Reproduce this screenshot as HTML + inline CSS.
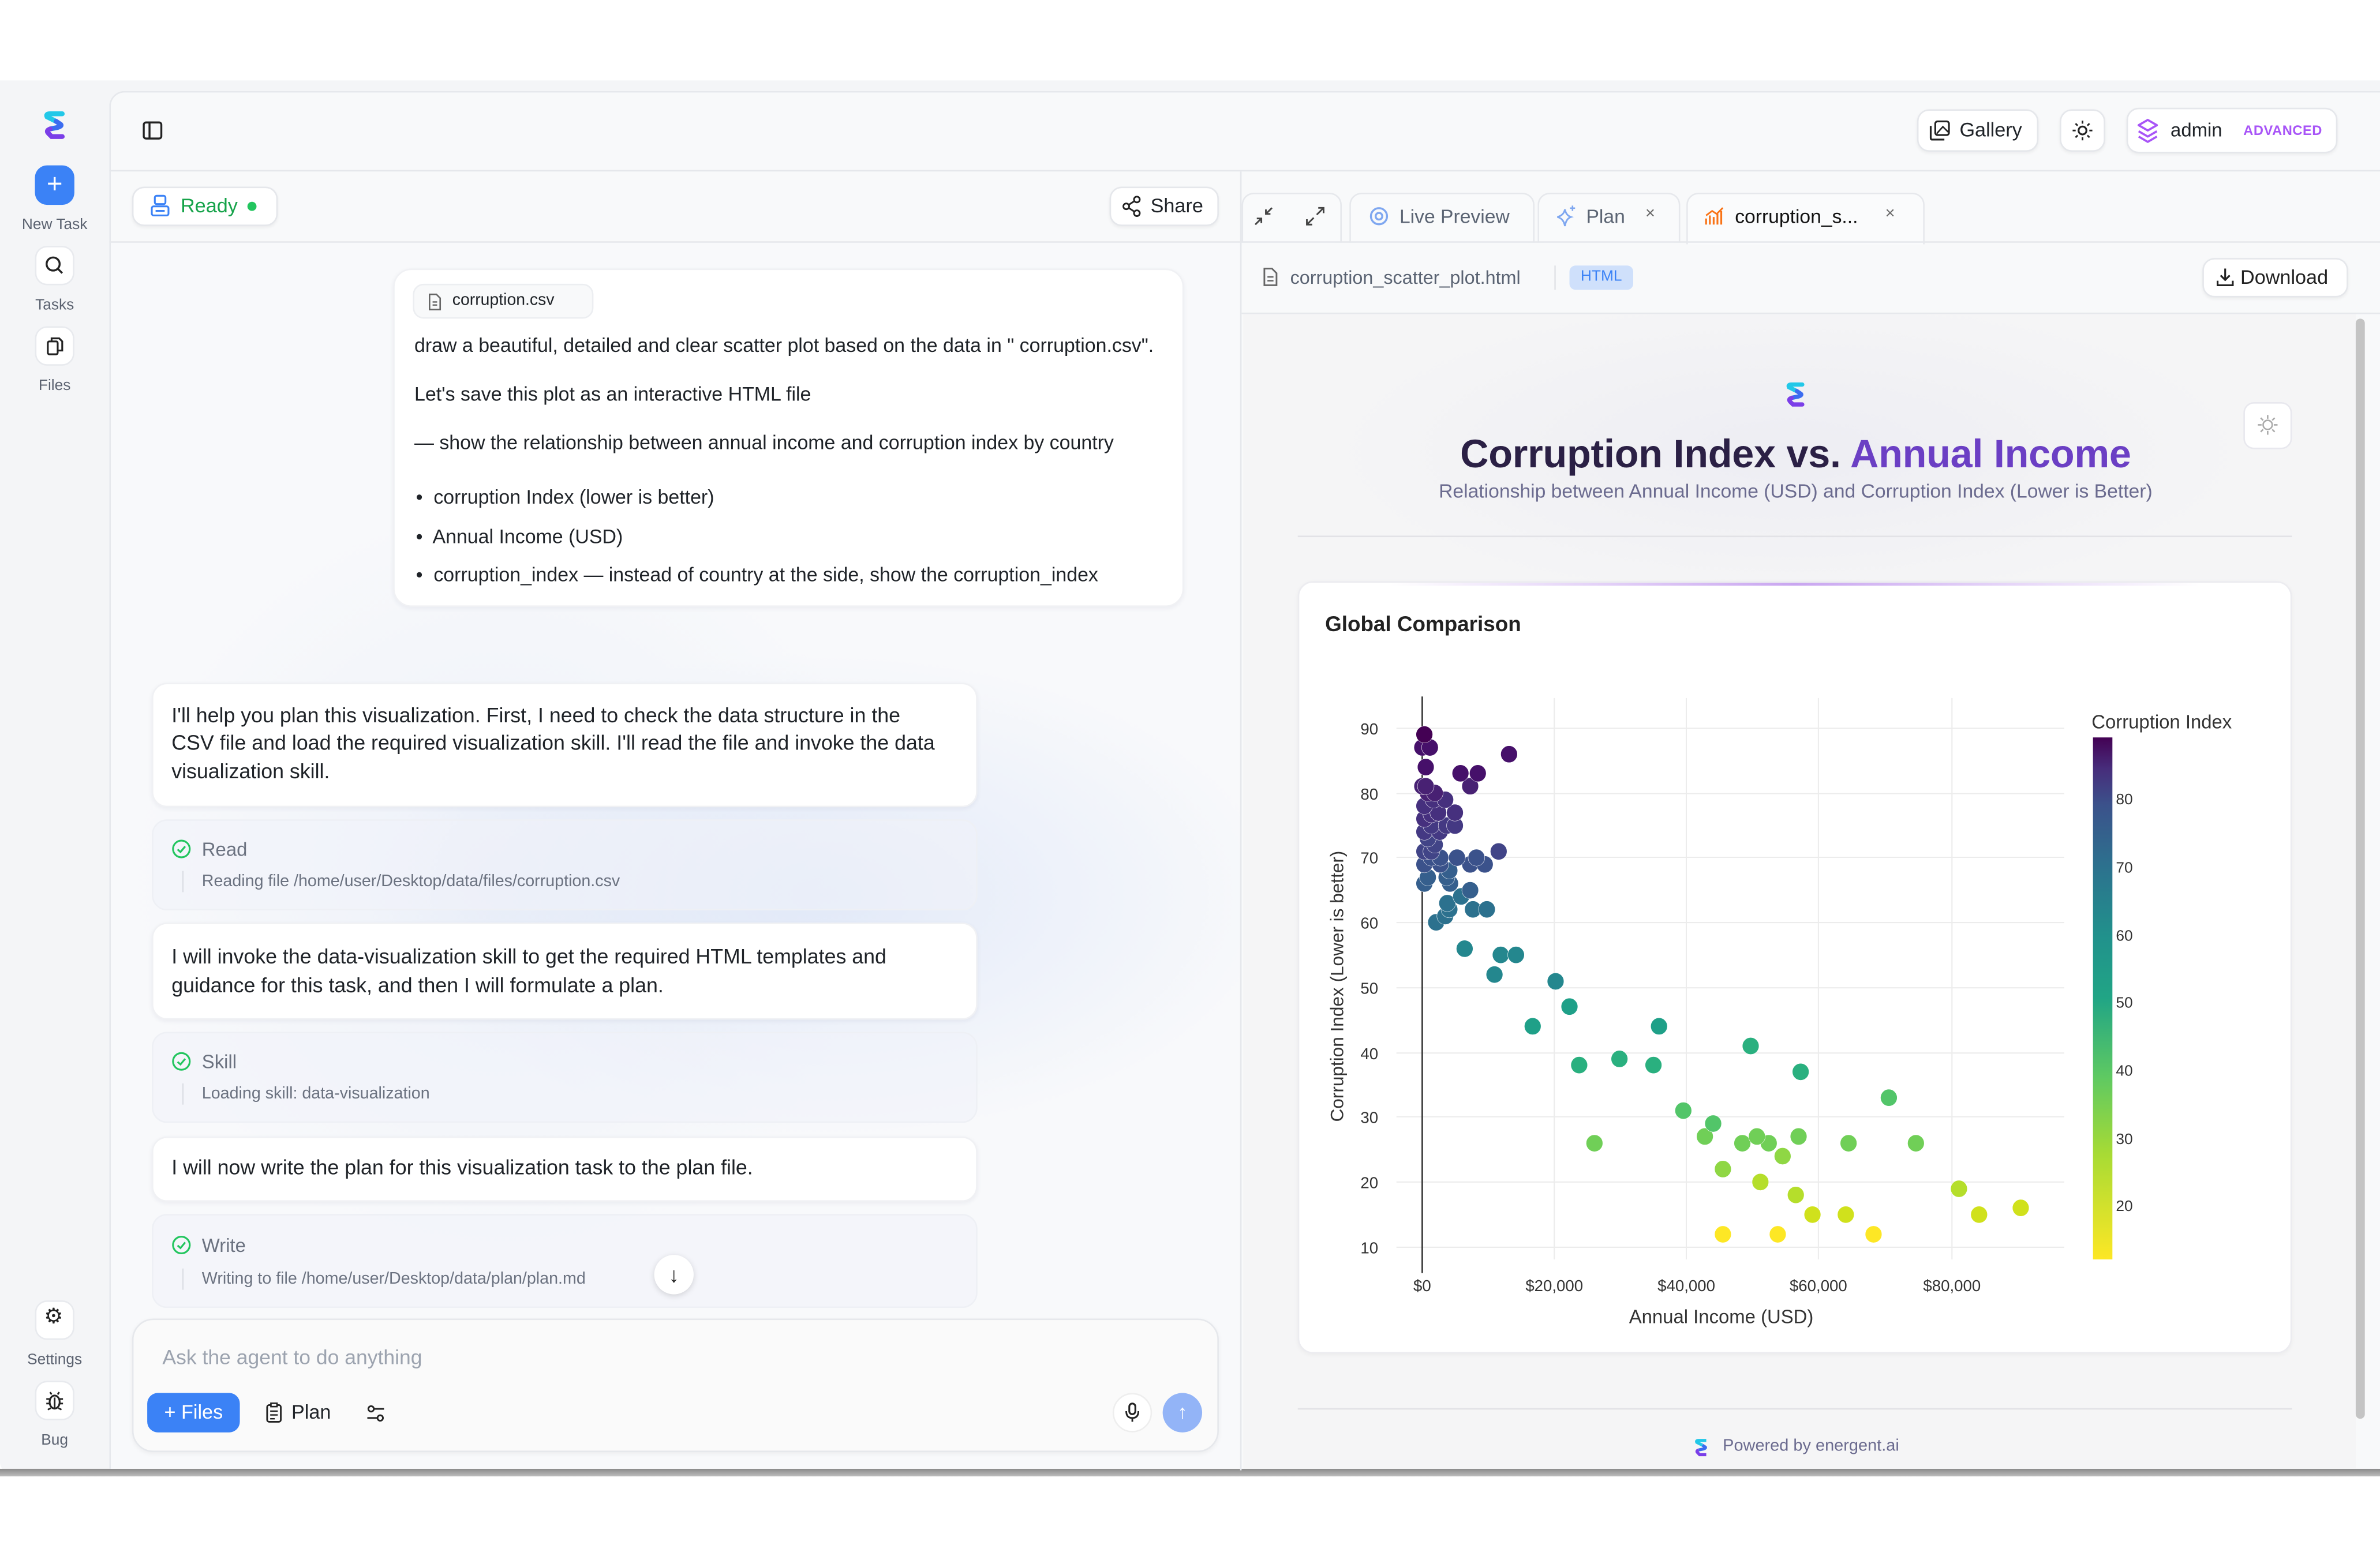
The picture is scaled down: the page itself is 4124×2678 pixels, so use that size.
<!DOCTYPE html>
<html><head><meta charset="utf-8"><style>
*{box-sizing:border-box;margin:0;padding:0}
html,body{width:4124px;height:2678px;overflow:hidden;background:#fff}
#s{position:absolute;left:0;top:0;width:1568px;height:1018.2px;transform:scale(2.63010);transform-origin:0 0;font-family:"Liberation Sans",sans-serif;color:#1f2328}
.a{position:absolute}
.t{position:absolute;white-space:nowrap}
.btn{position:absolute;background:#fff;border:1px solid #e5e7eb;border-radius:8px;box-shadow:0 1px 2px rgba(0,0,0,.05)}
.sb{position:absolute;left:23px;width:26px;height:26px;border-radius:8px;background:#fff;border:1px solid #e8eaee}
.sl{position:absolute;left:0;width:72px;text-align:center;font-size:10px;color:#5b6270}
.card{position:absolute;background:#fff;border-radius:10px;box-shadow:0 1px 3px rgba(30,40,80,.06);border:1px solid #f0f1f4}
.tool{position:absolute;left:100px;width:544px;border-radius:10px;background:rgba(240,243,250,.55);border:1px solid #eef0f5}
.tx{font-size:12.6px;color:#1f2328}
</style></head><body><div id="s">
<div class="a" style="left:0;top:53px;width:1568px;height:917px;background:#f4f5f7;border-radius:0 0 6px 6px"></div>
<div class="a" style="left:0;top:968px;width:1568px;height:5px;background:linear-gradient(#8a8a8a,#bdbdbd)"></div>
<div class="a" style="left:72px;top:60px;width:1496px;height:908px;background:#f8f9fa;border-left:1px solid #e6e8ec;border-top:1px solid #e6e8ec;border-radius:10px 0 0 0"></div>
<div class="a" style="left:73px;top:160px;width:745px;height:808px;background:radial-gradient(ellipse 300px 160px at 470px 430px,rgba(200,215,245,.45),transparent),radial-gradient(ellipse 250px 250px at 260px 420px,rgba(215,225,245,.35),transparent),#f8f9fb"></div>
<div class="a" style="left:72px;top:112px;width:1496px;height:1px;background:#e5e7eb"></div>
<svg class="a" style="left:28px;top:73px" width="16" height="19" viewBox="0 0 16 19"><path d="M13 2 L5 2 Q2 2 3 4 L9 7" stroke="#22c8e8" stroke-width="3.2" fill="none" stroke-linecap="round"/><path d="M9 7 L12 9 Q13 10 10 11 L5 12" stroke="#3b6cf0" stroke-width="3.2" fill="none" stroke-linecap="round"/><path d="M5 12 Q2 13 4 15 L6 17 L13 17" stroke="#7b3ee8" stroke-width="3.2" fill="none" stroke-linecap="round"/></svg>
<div class="a" style="left:23px;top:109px;width:26px;height:26px;border-radius:8px;background:#3b82f6;color:#fff;font-size:18px;line-height:25px;text-align:center">+</div>
<div class="sl" style="top:143px">New Task</div>
<div class="sb" style="top:162px"></div>
<svg class="a" style="left:29px;top:168px" width="14" height="14" viewBox="0 0 14 14"><circle cx="6" cy="6" r="4.3" stroke="#222" stroke-width="1.3" fill="none"/><path d="M9.2 9.2 L12 12" stroke="#222" stroke-width="1.3"/></svg>
<div class="sl" style="top:196px">Tasks</div>
<div class="sb" style="top:215px"></div>
<svg class="a" style="left:29px;top:221px" width="14" height="14" viewBox="0 0 14 14"><rect x="2.5" y="4" width="6.5" height="8.5" rx="1" stroke="#222" stroke-width="1.2" fill="none"/><path d="M5 4 V2 H10 L12 4 V10 H9" stroke="#222" stroke-width="1.2" fill="none"/></svg>
<div class="sl" style="top:249px">Files</div>
<div class="sb" style="top:857px"></div>
<div class="t" style="left:29px;top:859px;font-size:14px;color:#222">⚙</div>
<div class="sl" style="top:891px">Settings</div>
<div class="sb" style="top:910px"></div>
<svg class="a" style="left:29px;top:916px" width="14" height="14" viewBox="0 0 14 14"><ellipse cx="7" cy="8" rx="3.3" ry="4.3" stroke="#222" stroke-width="1.2" fill="none"/><path d="M4 6 H1.5 M10 6 H12.5 M3.8 9 H1.5 M10.2 9 H12.5 M4.5 12 L2.5 13 M9.5 12 L11.5 13 M5 3 L4 1.5 M9 3 L10 1.5 M7 5 V12" stroke="#222" stroke-width="1.1"/></svg>
<div class="sl" style="top:944px">Bug</div>
<svg class="a" style="left:94px;top:80px" width="13" height="12" viewBox="0 0 13 12"><rect x="0.7" y="0.7" width="11.6" height="10.6" rx="1.5" stroke="#222" stroke-width="1.3" fill="none"/><path d="M4.5 1 V11" stroke="#222" stroke-width="1.3"/></svg>
<div class="btn" style="left:1263px;top:72px;width:80px;height:28px"></div>
<svg class="a" style="left:1271px;top:79px" width="14" height="14" viewBox="0 0 14 14"><rect x="4" y="1" width="9" height="9" rx="1.5" stroke="#222" stroke-width="1.2" fill="none"/><path d="M1 4 V12 Q1 13 2 13 H10" stroke="#222" stroke-width="1.2" fill="none"/><path d="M5 9 L9 4.5 L12.5 8" stroke="#222" stroke-width="1" fill="none"/></svg>
<div class="t" style="left:1291px;top:78px;font-size:13px">Gallery</div>
<div class="btn" style="left:1357px;top:72px;width:30px;height:28px"></div>
<svg class="a" style="left:1365px;top:79px" width="14" height="14" viewBox="0 0 14 14"><circle cx="7" cy="7" r="2.6" stroke="#222" stroke-width="1.2" fill="none"/><path d="M7 0.5 V2.5 M7 11.5 V13.5 M0.5 7 H2.5 M11.5 7 H13.5 M2.4 2.4 L3.8 3.8 M10.2 10.2 L11.6 11.6 M2.4 11.6 L3.8 10.2 M10.2 3.8 L11.6 2.4" stroke="#222" stroke-width="1.1"/></svg>
<div class="btn" style="left:1401px;top:71px;width:139px;height:30px"></div>
<svg class="a" style="left:1407px;top:78px" width="16" height="17" viewBox="0 0 16 17"><path d="M8 1 L14 4.5 L8 8 L2 4.5 Z" stroke="#a855f7" stroke-width="1.4" fill="none" stroke-linejoin="round"/><path d="M2 8.5 L8 12 L14 8.5 M2 12 L8 15.5 L14 12" stroke="#a855f7" stroke-width="1.4" fill="none" stroke-linejoin="round"/></svg>
<div class="t" style="left:1430px;top:79px;font-size:12.5px">admin</div>
<div class="t" style="left:1478px;top:81px;font-size:9px;font-weight:bold;color:#a855f7;letter-spacing:.2px">ADVANCED</div>
<div class="a" style="left:72px;top:159px;width:746px;height:1px;background:#e6e8ec"></div>
<div class="btn" style="left:87px;top:123px;width:96px;height:26px"></div>
<svg class="a" style="left:99px;top:128px" width="13" height="15" viewBox="0 0 13 15"><rect x="3" y="1" width="7" height="5.5" rx="1.2" stroke="#3b82f6" stroke-width="1.2" fill="none"/><rect x="1" y="8" width="11" height="6" rx="1.2" stroke="#3b82f6" stroke-width="1.2" fill="none"/><path d="M3.5 11 H9.5" stroke="#3b82f6" stroke-width="1.2"/></svg>
<div class="t" style="left:119px;top:128px;font-size:13px;color:#16a34a">Ready</div>
<div class="a" style="left:163px;top:133px;width:6px;height:6px;border-radius:50%;background:#22c55e"></div>
<div class="btn" style="left:731px;top:123px;width:72px;height:26px"></div>
<svg class="a" style="left:739px;top:129px" width="13" height="14" viewBox="0 0 13 14"><circle cx="10" cy="2.5" r="1.9" stroke="#222" stroke-width="1.1" fill="none"/><circle cx="3" cy="7" r="1.9" stroke="#222" stroke-width="1.1" fill="none"/><circle cx="10" cy="11.5" r="1.9" stroke="#222" stroke-width="1.1" fill="none"/><path d="M4.6 6 L8.4 3.5 M4.6 8 L8.4 10.5" stroke="#222" stroke-width="1.1"/></svg>
<div class="t" style="left:758px;top:128px;font-size:13px">Share</div>
<div class="card" style="left:259px;top:177px;width:521px;height:223px;border-radius:12px"></div>
<div class="a" style="left:272px;top:187px;width:119px;height:23px;border-radius:7px;background:#f8f9fa;border:1px solid #eceef1"></div>
<svg class="a" style="left:282px;top:193px" width="9" height="12" viewBox="0 0 9 12"><path d="M1 1 H5.5 L8 3.5 V11 H1 Z" stroke="#666" stroke-width="1" fill="none"/><path d="M3 6 H6 M3 8 H6" stroke="#666" stroke-width=".9"/></svg>
<div class="t" style="left:298px;top:192px;font-size:10.8px">corruption.csv</div>
<div class="t tx" style="left:273px;top:220px;font-size:12.9px">draw a beautiful, detailed and clear scatter plot based on the data in " corruption.csv".</div>
<div class="t tx" style="left:273px;top:252px;font-size:12.9px">Let's save this plot as an interactive HTML file</div>
<div class="t tx" style="left:273px;top:284px;font-size:12.9px">— show the relationship between annual income and corruption index by country</div>
<div class="t tx" style="left:274px;top:320px;font-size:12.9px">•&nbsp; corruption Index (lower is better)</div>
<div class="t tx" style="left:274px;top:346px;font-size:12.9px">•&nbsp; Annual Income (USD)</div>
<div class="t tx" style="left:274px;top:371px;font-size:12.9px">•&nbsp; corruption_index — instead of country at the side, show the corruption_index</div>
<div class="card" style="left:100px;top:450px;width:544px;height:82px"></div>
<div class="t tx" style="left:113px;top:463px;line-height:18.3px;font-size:13.6px">I'll help you plan this visualization. First, I need to check the data structure in the<br>CSV file and load the required visualization skill. I'll read the file and invoke the data<br>visualization skill.</div>
<div class="tool" style="top:540px;height:60px"></div>
<div class="card" style="left:100px;top:608px;width:544px;height:64px"></div>
<div class="t tx" style="left:113px;top:622px;line-height:18.5px;font-size:13.6px">I will invoke the data-visualization skill to get the required HTML templates and<br>guidance for this task, and then I will formulate a plan.</div>
<div class="tool" style="top:680px;height:60px"></div>
<div class="card" style="left:100px;top:749px;width:544px;height:43px"></div>
<div class="t tx" style="left:113px;top:762px;font-size:13.6px">I will now write the plan for this visualization task to the plan file.</div>
<div class="tool" style="top:800px;height:62px"></div>
<svg class="a" style="left:113px;top:553px" width="13" height="13"><circle cx="6.5" cy="6.5" r="5.5" stroke="#22c55e" stroke-width="1.2" fill="none"/><path d="M4 6.8 L5.9 8.5 L9 4.8" stroke="#22c55e" stroke-width="1.2" fill="none"/></svg>
<div class="t" style="left:133px;top:553px;font-size:12.5px;color:#6b7280">Read</div>
<div class="a" style="left:120px;top:574px;width:1px;height:14px;background:#dde0e6"></div>
<div class="t" style="left:133px;top:575px;font-size:10.9px;color:#6b7280">Reading file /home/user/Desktop/data/files/corruption.csv</div>
<svg class="a" style="left:113px;top:693px" width="13" height="13"><circle cx="6.5" cy="6.5" r="5.5" stroke="#22c55e" stroke-width="1.2" fill="none"/><path d="M4 6.8 L5.9 8.5 L9 4.8" stroke="#22c55e" stroke-width="1.2" fill="none"/></svg>
<div class="t" style="left:133px;top:693px;font-size:12.5px;color:#6b7280">Skill</div>
<div class="a" style="left:120px;top:714px;width:1px;height:14px;background:#dde0e6"></div>
<div class="t" style="left:133px;top:715px;font-size:10.9px;color:#6b7280">Loading skill: data-visualization</div>
<svg class="a" style="left:113px;top:814px" width="13" height="13"><circle cx="6.5" cy="6.5" r="5.5" stroke="#22c55e" stroke-width="1.2" fill="none"/><path d="M4 6.8 L5.9 8.5 L9 4.8" stroke="#22c55e" stroke-width="1.2" fill="none"/></svg>
<div class="t" style="left:133px;top:814px;font-size:12.5px;color:#6b7280">Write</div>
<div class="a" style="left:120px;top:836px;width:1px;height:14px;background:#dde0e6"></div>
<div class="t" style="left:133px;top:837px;font-size:10.9px;color:#6b7280">Writing to file /home/user/Desktop/data/plan/plan.md</div>
<div class="a" style="left:431px;top:827px;width:26px;height:26px;border-radius:50%;background:#fff;box-shadow:0 1px 4px rgba(0,0,0,.15);text-align:center;font-size:14px;line-height:26px;color:#222">↓</div>
<div class="a" style="left:87px;top:869px;width:716px;height:88px;border-radius:14px;background:#fafafa;border:1px solid #e6e8ec;box-shadow:0 1px 3px rgba(0,0,0,.05)"></div>
<div class="t" style="left:107px;top:887px;font-size:13.5px;color:#9ca3af">Ask the agent to do anything</div>
<div class="a" style="left:97px;top:918px;width:61px;height:26px;border-radius:7px;background:#3b82f6;color:#fff;font-size:13px;line-height:26px;text-align:center">+ Files</div>
<svg class="a" style="left:175px;top:924px" width="11" height="14" viewBox="0 0 11 14"><rect x="1" y="2" width="9" height="11" rx="1.3" stroke="#222" stroke-width="1.1" fill="none"/><rect x="3.5" y="0.8" width="4" height="2.2" stroke="#222" stroke-width="1" fill="#fff"/><path d="M3 6 H8 M3 8.5 H8 M3 11 H6" stroke="#222" stroke-width=".9"/></svg>
<div class="t" style="left:192px;top:923px;font-size:13px">Plan</div>
<svg class="a" style="left:241px;top:925px" width="13" height="13" viewBox="0 0 13 13"><circle cx="3.5" cy="3.5" r="1.8" stroke="#222" stroke-width="1.1" fill="none"/><circle cx="9.5" cy="9.5" r="1.8" stroke="#222" stroke-width="1.1" fill="none"/><path d="M5.3 3.5 H12 M1 9.5 H7.7" stroke="#222" stroke-width="1.1"/></svg>
<div class="a" style="left:733px;top:918px;width:26px;height:26px;border-radius:50%;background:#fff;border:1px solid #eee"></div>
<svg class="a" style="left:741px;top:924px" width="10" height="14" viewBox="0 0 10 14"><rect x="3" y="1" width="4" height="7" rx="2" stroke="#222" stroke-width="1.2" fill="none"/><path d="M1 6 Q1 10.5 5 10.5 Q9 10.5 9 6 M5 10.5 V13" stroke="#222" stroke-width="1.1" fill="none"/></svg>
<div class="a" style="left:766px;top:918px;width:26px;height:26px;border-radius:50%;background:#93b4f7;color:#fff;text-align:center;font-size:13px;line-height:26px">↑</div>
<div class="a" style="left:817px;top:113px;width:1px;height:856px;background:#e6e8ec"></div>
<div class="t" style="left:816px;top:557px;font-size:9px;color:#666">⋮</div>
<div class="a" style="left:818px;top:127px;width:66px;height:33px;border:1px solid #e6e8ec;border-bottom:none;border-radius:8px 8px 0 0;background:#f9fafb"></div>
<svg class="a" style="left:826px;top:136px" width="13" height="13" viewBox="0 0 13 13"><path d="M12 1 L8 5 M8 2 V5 H11 M1 12 L5 8 M2 8 H5 V11" stroke="#444" stroke-width="1.1" fill="none"/></svg>
<svg class="a" style="left:860px;top:136px" width="13" height="13" viewBox="0 0 13 13"><path d="M7.5 5.5 L12 1 M8.5 1 H12 V4.5 M5.5 7.5 L1 12 M1 8.5 V12 H4.5" stroke="#444" stroke-width="1.1" fill="none"/></svg>
<div class="a" style="left:889px;top:127px;width:122px;height:33px;border:1px solid #e6e8ec;border-bottom:none;border-radius:8px 8px 0 0;background:#f9fafb"></div>
<svg class="a" style="left:902px;top:136px" width="13" height="13"><circle cx="6.5" cy="6.5" r="5.3" stroke="#7fa7f0" stroke-width="1.3" fill="none"/><circle cx="6.5" cy="6.5" r="2.2" stroke="#7fa7f0" stroke-width="1.3" fill="none"/></svg>
<div class="t" style="left:922px;top:135px;font-size:12.8px;color:#5b6473">Live Preview</div>
<div class="a" style="left:1013px;top:127px;width:94px;height:33px;border:1px solid #e6e8ec;border-bottom:none;border-radius:8px 8px 0 0;background:#f9fafb"></div>
<svg class="a" style="left:1025px;top:135px" width="14" height="15" viewBox="0 0 14 15"><path d="M6 3 Q6.8 7 10 8 Q6.8 9 6 14 Q5.2 9 1 8 Q5.2 7 6 3 Z" stroke="#7fa7f0" stroke-width="1.1" fill="none"/><path d="M11 0.5 V4 M9.3 2.2 H12.7" stroke="#7fa7f0" stroke-width="1"/></svg>
<div class="t" style="left:1045px;top:135px;font-size:12.8px;color:#5b6473">Plan</div>
<div class="t" style="left:1084px;top:135px;font-size:11px;color:#666">×</div>
<div class="a" style="left:1111px;top:127px;width:157px;height:34px;border:1px solid #e6e8ec;border-bottom:none;border-radius:8px 8px 0 0;background:#fafbfc"></div>
<svg class="a" style="left:1123px;top:136px" width="13" height="13" viewBox="0 0 13 13"><path d="M1 12 V8 M3.5 12 V6 M6 12 V7 M8.5 12 V5 M11 12 V3" stroke="#f97316" stroke-width="1.2"/><path d="M1 6 L5 3 L8 5 L12 1" stroke="#f97316" stroke-width="1.1" fill="none"/></svg>
<div class="t" style="left:1143px;top:135px;font-size:12.8px;color:#111">corruption_s...</div>
<div class="t" style="left:1242px;top:135px;font-size:11px;color:#666">×</div>
<div class="a" style="left:818px;top:159px;width:750px;height:1px;background:#e6e8ec"></div>
<svg class="a" style="left:832px;top:176px" width="10" height="13" viewBox="0 0 10 13"><path d="M1 1 H6 L9 4 V12 H1 Z" stroke="#666" stroke-width="1.1" fill="none"/><path d="M3 6.5 H7 M3 9 H7" stroke="#666" stroke-width="1"/></svg>
<div class="t" style="left:850px;top:176px;font-size:12.3px;color:#5b6473">corruption_scatter_plot.html</div>
<div class="a" style="left:1024px;top:175px;width:1px;height:16px;background:#e3e5e8"></div>
<div class="a" style="left:1034px;top:175px;width:42px;height:16px;border-radius:4px;background:#cfe0fb;color:#3b82f6;font-size:10px;line-height:16px;text-align:center">HTML</div>
<div class="btn" style="left:1451px;top:170px;width:96px;height:26px"></div>
<svg class="a" style="left:1460px;top:176px" width="12" height="13" viewBox="0 0 12 13"><path d="M6 1 V8.5 M3 5.5 L6 8.5 L9 5.5 M1 9 V12 H11 V9" stroke="#222" stroke-width="1.2" fill="none"/></svg>
<div class="t" style="left:1476px;top:175px;font-size:13px;color:#222">Download</div>
<div class="a" style="left:818px;top:206px;width:750px;height:1px;background:#e6e8ec"></div>
<div class="a" style="left:819px;top:207px;width:733px;height:761px;background:radial-gradient(ellipse 300px 100px at 360px 90px,rgba(235,235,242,.8),transparent),#f5f5f6"></div>
<div class="a" style="left:1552px;top:210px;width:6px;height:725px;border-radius:3px;background:#c4c4c4"></div>
<svg class="a" style="left:1176px;top:251px" width="14" height="18" viewBox="0 0 16 19"><path d="M13 2 L5 2 Q2 2 3 4 L9 7" stroke="#22c8e8" stroke-width="3.2" fill="none" stroke-linecap="round"/><path d="M9 7 L12 9 Q13 10 10 11 L5 12" stroke="#3b6cf0" stroke-width="3.2" fill="none" stroke-linecap="round"/><path d="M5 12 Q2 13 4 15 L6 17 L13 17" stroke="#7b3ee8" stroke-width="3.2" fill="none" stroke-linecap="round"/></svg>
<div class="a" style="left:1478px;top:265px;width:32px;height:31px;border-radius:7px;background:#fff;border:1px solid #e8e8ee"></div>
<svg class="a" style="left:1487px;top:273px" width="14" height="14" viewBox="0 0 14 14"><circle cx="7" cy="7" r="3" stroke="#aaa" stroke-width="1" fill="none"/><path d="M7 0.5 V3 M7 11 V13.5 M0.5 7 H3 M11 7 H13.5 M2.4 2.4 L4 4 M10 10 L11.6 11.6 M2.4 11.6 L4 10 M10 4 L11.6 2.4" stroke="#aaa" stroke-width="1"/></svg>
<div class="t" style="left:783px;width:800px;top:284px;text-align:center;font-size:26px;font-weight:bold;letter-spacing:-.1px"><span style="color:#2b2045">Corruption Index vs. </span><span style="color:#6b3fc4">Annual Income</span></div>
<div class="t" style="left:783px;width:800px;top:316px;text-align:center;font-size:12.8px;color:#6b6b8f">Relationship between Annual Income (USD) and Corruption Index (Lower is Better)</div>
<div class="a" style="left:855px;top:353px;width:655px;height:1px;background:#e2e2e6"></div>
<div class="a" style="left:855px;top:383px;width:655px;height:509px;border-radius:10px;background:#fff;border:1px solid #ececf0;box-shadow:0 1px 3px rgba(0,0,0,.04);overflow:hidden"><div style="position:absolute;left:60px;right:60px;top:0;height:2px;background:linear-gradient(90deg,transparent,#c9a6f0,transparent)"></div></div>
<div class="t" style="left:873px;top:403px;font-size:14px;font-weight:bold;color:#222">Global Comparison</div>
<svg class="a" style="left:0;top:0" width="1568" height="1018">
<g stroke="#ececec" stroke-width="0.8">
<line x1="1024" y1="460" x2="1024" y2="830"/><line x1="1111" y1="460" x2="1111" y2="830"/><line x1="1198" y1="460" x2="1198" y2="830"/><line x1="1286" y1="460" x2="1286" y2="830"/>
<line x1="920" y1="480" x2="1360" y2="480"/><line x1="920" y1="523" x2="1360" y2="523"/><line x1="920" y1="565" x2="1360" y2="565"/><line x1="920" y1="608" x2="1360" y2="608"/><line x1="920" y1="651" x2="1360" y2="651"/><line x1="920" y1="694" x2="1360" y2="694"/><line x1="920" y1="736" x2="1360" y2="736"/><line x1="920" y1="779" x2="1360" y2="779"/><line x1="920" y1="822" x2="1360" y2="822"/>
</g>
<line x1="937" y1="459" x2="937" y2="839" stroke="#333" stroke-width="1"/>
<g font-family="Liberation Sans,sans-serif" font-size="10.5" fill="#333" text-anchor="end">
<text x="908" y="484">90</text><text x="908" y="527">80</text><text x="908" y="569">70</text><text x="908" y="612">60</text><text x="908" y="655">50</text><text x="908" y="698">40</text><text x="908" y="740">30</text><text x="908" y="783">20</text><text x="908" y="826">10</text>
</g>
<g font-family="Liberation Sans,sans-serif" font-size="10.5" fill="#333" text-anchor="middle">
<text x="937" y="851">$0</text><text x="1024" y="851">$20,000</text><text x="1111" y="851">$40,000</text><text x="1198" y="851">$60,000</text><text x="1286" y="851">$80,000</text>
<text x="1134" y="872" font-size="12.5">Annual Income (USD)</text>
<text transform="translate(885,650) rotate(-90)" font-size="12">Corruption Index (Lower is better)</text>
</g>
<defs><linearGradient id="vir" x1="0" y1="1" x2="0" y2="0"><stop offset="0" stop-color="#fde725"/><stop offset=".2" stop-color="#a8db34"/><stop offset=".35" stop-color="#5ec962"/><stop offset=".5" stop-color="#21a585"/><stop offset=".62" stop-color="#21918c"/><stop offset=".75" stop-color="#2c728e"/><stop offset=".87" stop-color="#3b528b"/><stop offset=".94" stop-color="#472d7b"/><stop offset="1" stop-color="#440154"/></linearGradient></defs>
<rect x="1378.9" y="486" width="12.8" height="344" fill="url(#vir)"/>
<g font-family="Liberation Sans,sans-serif" font-size="10" fill="#333">
<text x="1378" y="480" font-size="12.5">Corruption Index</text>
<text x="1394" y="530">80</text><text x="1394" y="575">70</text><text x="1394" y="620">60</text><text x="1394" y="664">50</text><text x="1394" y="709">40</text><text x="1394" y="754">30</text><text x="1394" y="798">20</text>
</g>
<g transform="matrix(0.4574 0 0 0.3705 851.5 436.65)" stroke="#fff" stroke-width="0.5" vector-effect="non-scaling-stroke">
<g fill="#fde725"><ellipse cx="620" cy="1017" rx="12" ry="15"/><ellipse cx="699" cy="1017" rx="12" ry="15"/><ellipse cx="837" cy="1017" rx="12" ry="15"/></g>
<g fill="#d0e11c"><ellipse cx="749" cy="982" rx="12" ry="15"/><ellipse cx="797" cy="982" rx="12" ry="15"/><ellipse cx="989" cy="982" rx="12" ry="15"/><ellipse cx="1049" cy="970" rx="12" ry="15"/></g>
<g fill="#b5de2b"><ellipse cx="725" cy="947" rx="12" ry="15"/><ellipse cx="960" cy="936" rx="12" ry="15"/><ellipse cx="674" cy="924" rx="12" ry="15"/></g>
<g fill="#8fd744"><ellipse cx="620" cy="901" rx="12" ry="15"/><ellipse cx="706" cy="878" rx="12" ry="15"/></g>
<g fill="#70cf57"><ellipse cx="435" cy="855" rx="12" ry="15"/><ellipse cx="648" cy="855" rx="12" ry="15"/><ellipse cx="686" cy="855" rx="12" ry="15"/><ellipse cx="801" cy="855" rx="12" ry="15"/><ellipse cx="898" cy="855" rx="12" ry="15"/><ellipse cx="594" cy="843" rx="12" ry="15"/><ellipse cx="669" cy="843" rx="12" ry="15"/><ellipse cx="729" cy="843" rx="12" ry="15"/></g>
<g fill="#52c569"><ellipse cx="606" cy="820" rx="12" ry="15"/><ellipse cx="563" cy="797" rx="12" ry="15"/><ellipse cx="859" cy="774" rx="12" ry="15"/></g>
<g fill="#2ab07f"><ellipse cx="732" cy="728" rx="12" ry="15"/><ellipse cx="413" cy="716" rx="12" ry="15"/><ellipse cx="471" cy="705" rx="12" ry="15"/><ellipse cx="520" cy="716" rx="12" ry="15"/><ellipse cx="660" cy="682" rx="12" ry="15"/></g>
<g fill="#1fa088"><ellipse cx="346" cy="647" rx="12" ry="15"/><ellipse cx="528" cy="647" rx="12" ry="15"/><ellipse cx="399" cy="612" rx="12" ry="15"/></g>
<g fill="#24878e"><ellipse cx="379" cy="567" rx="12" ry="15"/><ellipse cx="291" cy="555" rx="12" ry="15"/><ellipse cx="300" cy="520" rx="12" ry="15"/><ellipse cx="322" cy="520" rx="12" ry="15"/><ellipse cx="248" cy="509" rx="12" ry="15"/></g>
<g fill="#2c718e"><ellipse cx="207" cy="462" rx="12" ry="15"/><ellipse cx="220" cy="451" rx="12" ry="15"/><ellipse cx="226" cy="439" rx="12" ry="15"/><ellipse cx="260" cy="439" rx="12" ry="15"/><ellipse cx="280" cy="439" rx="12" ry="15"/><ellipse cx="223" cy="428" rx="12" ry="15"/><ellipse cx="243" cy="416" rx="12" ry="15"/></g>
<g fill="#355f8d"><ellipse cx="256" cy="405" rx="12" ry="15"/><ellipse cx="190" cy="393" rx="12" ry="15"/><ellipse cx="227" cy="393" rx="12" ry="15"/><ellipse cx="195" cy="382" rx="12" ry="15"/><ellipse cx="222" cy="382" rx="12" ry="15"/><ellipse cx="226" cy="370" rx="12" ry="15"/></g>
<g fill="#3b528b"><ellipse cx="190" cy="359" rx="12" ry="15"/><ellipse cx="213" cy="359" rx="12" ry="15"/><ellipse cx="256" cy="359" rx="12" ry="15"/><ellipse cx="277" cy="359" rx="12" ry="15"/><ellipse cx="200" cy="347" rx="12" ry="15"/><ellipse cx="213" cy="347" rx="12" ry="15"/><ellipse cx="237" cy="347" rx="12" ry="15"/><ellipse cx="265" cy="347" rx="12" ry="15"/></g>
<g fill="#414487"><ellipse cx="190" cy="336" rx="12" ry="15"/><ellipse cx="200" cy="336" rx="12" ry="15"/><ellipse cx="297" cy="336" rx="12" ry="15"/><ellipse cx="205" cy="324" rx="12" ry="15"/><ellipse cx="195" cy="313" rx="12" ry="15"/></g>
<g fill="#443983"><ellipse cx="190" cy="301" rx="12" ry="15"/><ellipse cx="212" cy="301" rx="12" ry="15"/><ellipse cx="200" cy="290" rx="12" ry="15"/><ellipse cx="222" cy="290" rx="12" ry="15"/><ellipse cx="234" cy="290" rx="12" ry="15"/></g>
<g fill="#46307e"><ellipse cx="190" cy="278" rx="12" ry="15"/><ellipse cx="200" cy="270" rx="12" ry="15"/><ellipse cx="210" cy="267" rx="12" ry="15"/><ellipse cx="234" cy="267" rx="12" ry="15"/><ellipse cx="190" cy="255" rx="12" ry="15"/><ellipse cx="203" cy="244" rx="12" ry="15"/><ellipse cx="220" cy="244" rx="12" ry="15"/></g>
<g fill="#482173"><ellipse cx="195" cy="232" rx="12" ry="15"/><ellipse cx="205" cy="232" rx="12" ry="15"/><ellipse cx="187" cy="220" rx="12" ry="15"/><ellipse cx="192" cy="220" rx="12" ry="15"/><ellipse cx="256" cy="220" rx="12" ry="15"/></g>
<g fill="#46106a"><ellipse cx="242" cy="197" rx="12" ry="15"/><ellipse cx="267" cy="197" rx="12" ry="15"/><ellipse cx="192" cy="186" rx="12" ry="15"/><ellipse cx="312" cy="163" rx="12" ry="15"/><ellipse cx="187" cy="151" rx="12" ry="15"/><ellipse cx="198" cy="151" rx="12" ry="15"/></g>
<g fill="#440154"><ellipse cx="190" cy="128" rx="12" ry="15"/></g>
</g>
</svg>
<div class="a" style="left:855px;top:928px;width:655px;height:1px;background:#e2e2e6"></div>
<svg class="a" style="left:1116px;top:948px" width="10" height="12" viewBox="0 0 16 19"><path d="M13 2 L5 2 Q2 2 3 4 L9 7" stroke="#22c8e8" stroke-width="3.2" fill="none"/><path d="M9 7 L12 9 Q13 10 10 11 L5 12" stroke="#3b6cf0" stroke-width="3.2" fill="none"/><path d="M5 12 Q2 13 4 15 L6 17 L13 17" stroke="#7b3ee8" stroke-width="3.2" fill="none"/></svg>
<div class="t" style="left:1135px;top:947px;font-size:11px;color:#6b6b8f">Powered by energent.ai</div>
</div></body></html>
